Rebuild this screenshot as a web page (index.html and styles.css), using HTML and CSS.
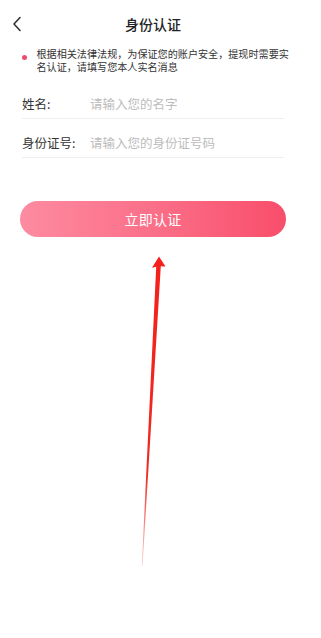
FILE: index.html
```html
<!DOCTYPE html>
<html lang="zh-CN">
<head>
<meta charset="utf-8">
<title>身份认证</title>
<link rel="stylesheet" href="styles.css">
</head>
<body>
<div class="page">
  <header class="nav">
    <span class="back">
      <svg width="10" height="16" viewBox="0 0 10 16"><path d="M8 1.5 L2 8 L8 14.5" fill="none" stroke="#333" stroke-width="1.6" stroke-linecap="round" stroke-linejoin="round"/></svg>
    </span>
    <h1 class="title">身份认证</h1>
  </header>
  <div class="notice">
    <span class="dot"></span>
    <p class="notice-text">根据相关法律法规，为保证您的账户安全，提现时需要实名认证，请填写您本人实名消息</p>
  </div>
  <form class="form">
    <label class="row">
      <span class="label">姓名:</span>
      <input class="input" type="text" placeholder="请输入您的名字">
    </label>
    <label class="row">
      <span class="label">身份证号:</span>
      <input class="input" type="text" placeholder="请输入您的身份证号码">
    </label>
  </form>
  <button class="submit" type="button">立即认证</button>
</div>
<svg class="annot" width="321" height="638" viewBox="0 0 321 638">
  <defs>
    <linearGradient id="fade" x1="0" y1="256" x2="0" y2="566" gradientUnits="userSpaceOnUse">
      <stop offset="0" stop-color="#f5201b"/>
      <stop offset="0.7" stop-color="#ee2a22"/>
      <stop offset="1" stop-color="#e8463f" stop-opacity="0.25"/>
    </linearGradient>
  </defs>
  <polygon fill="url(#fade)" points="159,256.5 165.5,266.5 160.8,266.2 142.5,566 141.8,566 156.2,266.8 152,267.8"/>
</svg>
</body>
</html>
```
FILE: styles.css
```css
* { box-sizing: border-box; }
html, body { margin: 0; padding: 0; background: #fff; }
body {
  font-family: "Noto Sans CJK SC", "Noto Sans", sans-serif;
  color: #333;
  width: 321px;
  height: 638px;
  position: relative;
  overflow: hidden;
}
.page { width: 306px; }
.nav {
  height: 47px;
  display: flex;
  align-items: center;
  justify-content: center;
  position: relative;
}
.back {
  position: absolute;
  left: 12px;
  top: 16px;
  width: 10px;
  height: 16px;
  display: flex;
}
.title {
  margin: 0;
  font-size: 14px;
  font-weight: 500;
  color: #222;
  line-height: 20px;
}
.notice {
  display: flex;
  align-items: flex-start;
  padding-left: 22px;
}
.dot {
  width: 5px;
  height: 5px;
  border-radius: 50%;
  background: #ef4a6a;
  margin-top: 8px;
  flex: none;
}
.notice-text {
  margin: 0 0 0 9.5px;
  width: 256px;
  font-size: 10.1px;
  line-height: 13px;
  color: #333;
}
.form {
  margin: 7px 22px 0 22px;
}
.row {
  display: flex;
  align-items: center;
  height: 39px;
  padding: 17px 0 7px;
  border-bottom: 1px solid #eeeeee;
}
.label {
  width: 68px;
  flex: none;
  font-size: 12.5px;
  line-height: 14px;
  color: #333;
}
.input {
  border: 0;
  outline: 0;
  padding: 0;
  margin: 0;
  font-family: inherit;
  font-size: 12.5px;
  line-height: 14px;
  height: 14px;
  color: #333;
  background: transparent;
  flex: 1;
  min-width: 0;
}
.input::placeholder { color: #bcbcbc; }
.submit {
  display: block;
  margin: 43px 0 0 20px;
  width: 266px;
  height: 36px;
  border: 0;
  border-radius: 18px;
  background: linear-gradient(90deg, #fd8ba1 0%, #fb6f88 50%, #f84e6b 100%);
  color: #fff;
  font-family: inherit;
  font-size: 14px;
  letter-spacing: 0.3px;
  padding: 0;
}
.annot {
  position: absolute;
  left: 0;
  top: 0;
  pointer-events: none;
}
```
